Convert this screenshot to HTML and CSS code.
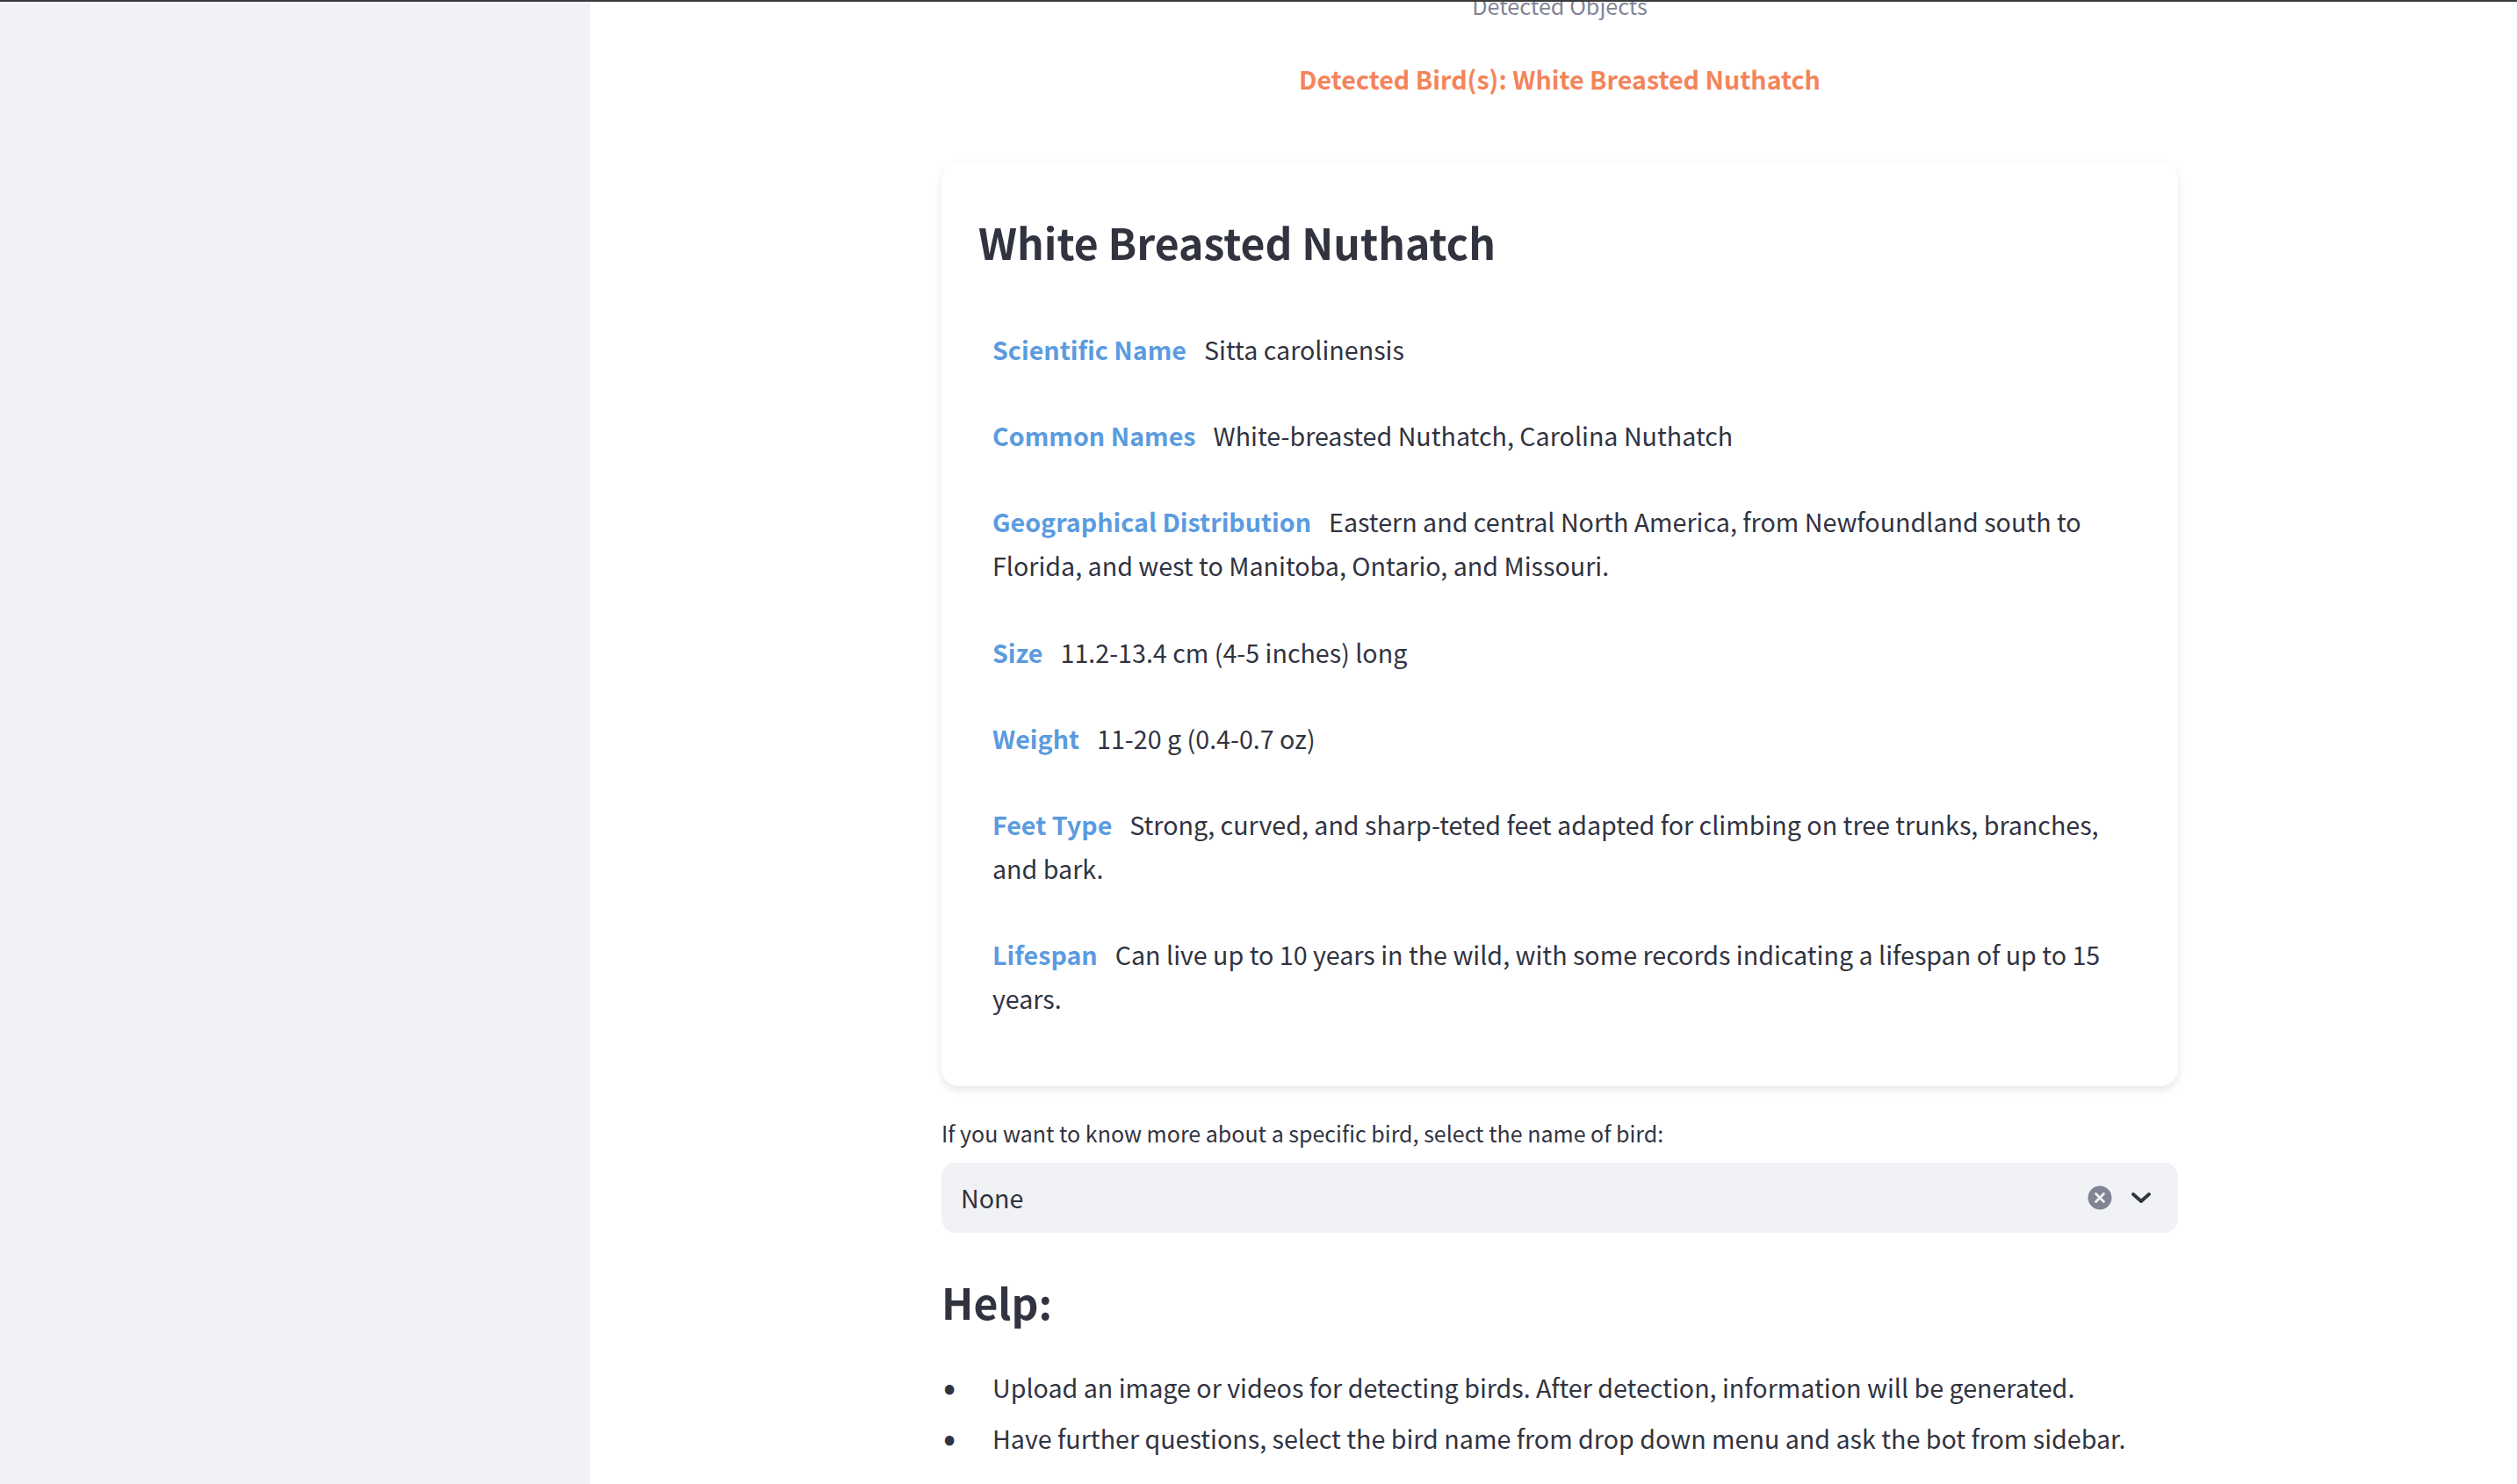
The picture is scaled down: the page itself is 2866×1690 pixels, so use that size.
FILE: index.html
```html
<!DOCTYPE html>
<html lang="en">
<head>
<meta charset="utf-8">
<title>Bird Detection</title>
<link rel="stylesheet" href="styles.css">
</head>
<body>
<div class="app">
  <aside class="sidebar"></aside>
  <main class="main">
    <div class="content">
      <p class="caption">Detected Objects</p>
      <p class="detected">Detected Bird(s): White Breasted Nuthatch</p>
      <section class="card">
        <h2 class="card-title">White Breasted Nuthatch</h2>
        <div class="facts">
          <p class="fact"><b class="key">Scientific Name</b>Sitta carolinensis</p>
          <p class="fact"><b class="key">Common Names</b>White-breasted Nuthatch, Carolina Nuthatch</p>
          <p class="fact"><b class="key">Geographical Distribution</b>Eastern and central North America, from Newfoundland south to Florida, and west to Manitoba, Ontario, and Missouri.</p>
          <p class="fact"><b class="key">Size</b>11.2-13.4 cm (4-5 inches) long</p>
          <p class="fact"><b class="key">Weight</b>11-20 g (0.4-0.7 oz)</p>
          <p class="fact"><b class="key">Feet Type</b>Strong, curved, and sharp-teted feet adapted for climbing on tree trunks, branches, and bark.</p>
          <p class="fact"><b class="key">Lifespan</b>Can live up to 10 years in the wild, with some records indicating a lifespan of up to 15 years.</p>
        </div>
      </section>
      <label class="select-label">If you want to know more about a specific bird, select the name of bird:</label>
      <div class="select">
        <span class="select-value">None</span>
        <svg class="icon-clear" viewBox="0 0 28 28" width="28" height="28"><circle cx="14" cy="14" r="13.5" fill="#808495"/><path d="M9.5 9.5l9 9M18.5 9.5l-9 9" stroke="#f0f2f6" stroke-width="2.8" stroke-linecap="round"/></svg>
        <svg class="icon-chevron" viewBox="0 0 22 14" width="22" height="14"><path d="M2 3l9 8 9-8" fill="none" stroke="#31333f" stroke-width="3.8" stroke-linecap="round" stroke-linejoin="round"/></svg>
      </div>
      <h2 class="help-title">Help:</h2>
      <ul class="help-list">
        <li class="help-item">Upload an image or videos for detecting birds. After detection, information will be generated.</li>
        <li class="help-item">Have further questions, select the bird name from drop down menu and ask the bot from sidebar.</li>
      </ul>
    </div>
  </main>
</div>
</body>
</html>
```
FILE: styles.css
```css
html, body {
  margin: 0;
  height: 1690px;
  overflow: hidden;
  background: #fff;
}
body {
  font-family: "Noto Sans CJK JP", "Source Sans Pro", "Noto Sans", sans-serif;
  color: #31333f;
  font-size: 28.65px;
  line-height: 50px;
}
.app {
  display: flex;
  height: 1688px;
  border-top: 2px solid #3a3a3a;
  overflow: hidden;
}
.sidebar {
  width: 672px;
  flex: none;
  background: #f0f2f6;
}
.main {
  flex: 1;
  min-width: 0;
}
.content {
  width: 1408px;
  margin-left: 400px;
}
.caption {
  margin: -14px 0 0;
  text-align: center;
  font-size: 25.2px;
  line-height: 36px;
  color: #808495;
}
.detected {
  margin: 41px 0 0;
  text-align: center;
  font-weight: 700;
  color: #f4845a;
  line-height: 50px;
}
.card {
  margin-top: 70px;
  border-radius: 20px;
  background: #fff;
  box-shadow: 0 4px 10px rgba(0, 0, 0, 0.1);
  padding: 54px 42px 75px;
}
.card-title {
  margin: 0;
  font-size: 48.1px;
  line-height: 72px;
  font-weight: 600;
}
.facts {
  margin-top: 62px;
  padding: 0 12px 0 16px;
  display: flex;
  flex-direction: column;
  gap: 48.2px;
}
.fact {
  margin: 0;
}
.key {
  color: #5b9bdf;
  font-weight: 700;
  margin-right: 20px;
}
.select-label {
  display: block;
  margin-top: 33px;
  font-size: 25px;
  line-height: 40px;
}
.select {
  margin-top: 14px;
  height: 80px;
  background: #f0f2f6;
  border-radius: 16px;
  display: flex;
  align-items: center;
  padding: 0 31px 0 22px;
}
.select-value {
  flex: 1;
}
.icon-clear {
  margin-right: 22px;
}
.help-title {
  margin: 42px 0 0;
  font-size: 48.1px;
  line-height: 72px;
  font-weight: 600;
}
.help-list {
  margin: 37px 0 0;
  padding: 0;
  list-style: none;
}
.help-item {
  display: flex;
  margin-bottom: 8px;
}
.help-item::before {
  content: "•";
  flex: none;
  width: 58px;
  font-size: 42px;
  line-height: 44px;
  text-indent: 2px;
}
```
